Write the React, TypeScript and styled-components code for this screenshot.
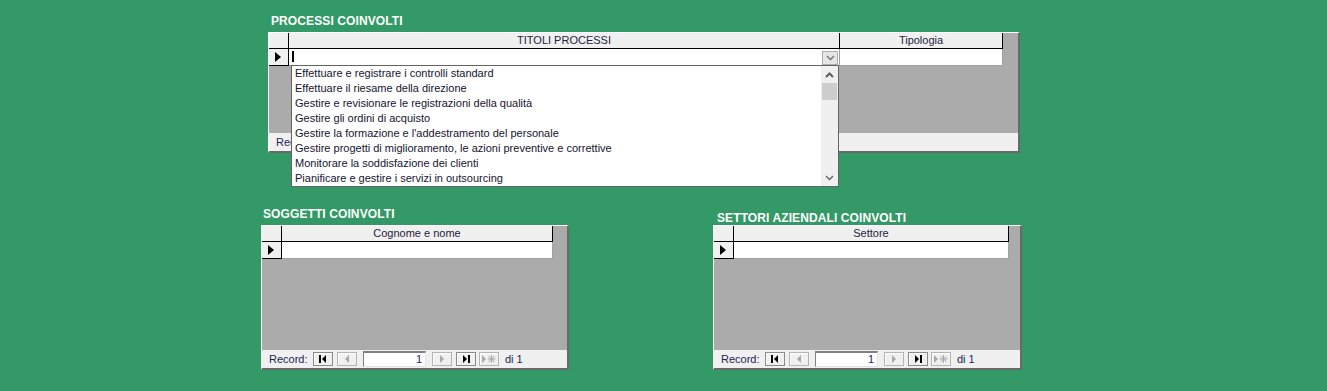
import React from 'react';
import styled, { createGlobalStyle } from 'styled-components';

const GlobalStyle = createGlobalStyle`
  html, body {
    margin: 0;
    padding: 0;
    background: #339966;
  }
  body {
    width: 1327px;
    height: 391px;
    overflow: hidden;
    font-family: 'Liberation Sans', Arial, sans-serif;
  }
  * {
    box-sizing: border-box;
  }
`;

const Page = styled.div`
  padding-top: 14px;
`;

const TopArea = styled.div`
  padding-left: 268px;
`;

const BottomRow = styled.div`
  display: flex;
  align-items: flex-end;
  gap: 144px;
  padding-left: 261px;
  margin-top: 54px;
`;

const Section = styled.div`
  display: flex;
  flex-direction: column;
`;

const Title = styled.div<{ $indent: number; $below: number }>`
  font-weight: bold;
  font-size: 12px;
  line-height: 14px;
  letter-spacing: 0.1px;
  color: #ffffff;
  white-space: nowrap;
  margin: 0 0 ${(p) => p.$below}px ${(p) => p.$indent}px;
`;

const Frame = styled.div<{ $width: number; $height: number }>`
  position: relative;
  width: ${(p) => p.$width}px;
  height: ${(p) => p.$height}px;
  background: #ababab;
  border-top: 1px solid #ffffff;
  border-left: 1px solid #ffffff;
  border-right: 2px solid #696969;
  border-bottom: 2px solid #696969;
  display: flex;
  flex-direction: column;
`;

const Sheet = styled.div`
  flex: 1;
`;

const Row = styled.div`
  display: flex;
`;

const HeadCell = styled.div<{ $w: number }>`
  width: ${(p) => p.$w}px;
  height: 16px;
  background: #f0f0f0;
  border-right: 1px solid #000000;
  border-bottom: 1px solid #000000;
  font-size: 11px;
  line-height: 15px;
  color: #1e2440;
  text-align: center;
  white-space: nowrap;
`;

const SelectorCell = styled.div`
  width: 20px;
  height: 17px;
  background: #f0f0f0;
  border-right: 1px solid #000000;
  border-bottom: 1px solid #000000;
  display: flex;
  align-items: center;
  justify-content: center;
`;

const DataCell = styled.div<{ $w: number }>`
  position: relative;
  width: ${(p) => p.$w}px;
  height: 17px;
  background: #ffffff;
  border-right: 1px solid #a0a0a0;
  border-bottom: 1px solid #a0a0a0;
`;

const Caret = styled.div`
  position: absolute;
  left: 3px;
  top: 2px;
  width: 2px;
  height: 11px;
  background: #000000;
`;

const ComboButton = styled.div`
  position: absolute;
  right: 1px;
  top: 2px;
  width: 16px;
  height: 14px;
  background: #e6e6e6;
  border: 1px solid #adadad;
  display: flex;
  align-items: center;
  justify-content: center;
`;

const DropList = styled.div`
  position: absolute;
  left: 22px;
  top: 32px;
  width: 548px;
  height: 122px;
  background: #ffffff;
  border: 1px solid #646464;
  display: flex;
  z-index: 2;
`;

const Options = styled.div`
  flex: 1;
  padding-left: 3px;
`;

const Option = styled.div`
  height: 15px;
  font-size: 11px;
  line-height: 15px;
  color: #151530;
  white-space: nowrap;
`;

const ScrollBar = styled.div`
  width: 17px;
  background: #f0f0f0;
  display: flex;
  flex-direction: column;
  align-items: center;
`;

const ScrollArrow = styled.div`
  width: 17px;
  height: 17px;
  display: flex;
  align-items: center;
  justify-content: center;
`;

const Thumb = styled.div`
  width: 15px;
  height: 17px;
  background: #cdcdcd;
`;

const Track = styled.div`
  flex: 1;
`;

const NavBar = styled.div`
  height: 18px;
  background: #f0f0f0;
  display: flex;
  align-items: center;
  padding-left: 7px;
  font-size: 11px;
  color: #1c2658;
  white-space: nowrap;
`;

const NavLabel = styled.span<{ $clip?: boolean }>`
  width: ${(p) => (p.$clip ? '16px' : '44px')};
  overflow: hidden;
`;

const NavButton = styled.div<{ $gap: number; $off?: boolean }>`
  width: 20px;
  height: 14px;
  margin-left: ${(p) => p.$gap}px;
  background: #f0f0f0;
  border: 1px solid ${(p) => (p.$off ? '#b4b4b4' : '#8a8a8a')};
  box-shadow: inset 1px 1px 0 #ffffff;
  display: flex;
  align-items: center;
  justify-content: center;
`;

const NavInput = styled.div`
  width: 63px;
  height: 16px;
  margin-left: 6px;
  background: #ffffff;
  border-top: 2px solid #808080;
  border-left: 1px solid #808080;
  border-right: 1px solid #e3e3e3;
  border-bottom: 1px solid #e3e3e3;
  text-align: right;
  padding-right: 3px;
  font-size: 11px;
  line-height: 13px;
  color: #1c2658;
`;

const NavCount = styled.span`
  margin-left: 6px;
`;

type Kind = 'first' | 'prev' | 'next' | 'last' | 'new';

const Glyph = ({ kind, off }: { kind: Kind; off?: boolean }) => {
  const c = off ? '#a8a8a8' : '#000000';
  if (kind === 'first')
    return (
      <svg width="10" height="10" viewBox="0 0 10 10">
        <rect x="1" y="1" width="2" height="8" fill={c} />
        <polygon points="8,1 4,5 8,9" fill={c} />
      </svg>
    );
  if (kind === 'prev')
    return (
      <svg width="10" height="10" viewBox="0 0 10 10">
        <polygon points="7,1 3,5 7,9" fill={c} />
      </svg>
    );
  if (kind === 'next')
    return (
      <svg width="10" height="10" viewBox="0 0 10 10">
        <polygon points="3,1 7,5 3,9" fill={c} />
      </svg>
    );
  if (kind === 'last')
    return (
      <svg width="10" height="10" viewBox="0 0 10 10">
        <polygon points="2,1 6,5 2,9" fill={c} />
        <rect x="7" y="1" width="2" height="8" fill={c} />
      </svg>
    );
  return (
    <svg width="16" height="10" viewBox="0 0 16 10">
      <polygon points="1,1 5,5 1,9" fill={c} />
      <g stroke={c} strokeWidth="1">
        <line x1="10.5" y1="1" x2="10.5" y2="9" />
        <line x1="6.5" y1="5" x2="14.5" y2="5" />
        <line x1="7.5" y1="2" x2="13.5" y2="8" />
        <line x1="13.5" y1="2" x2="7.5" y2="8" />
      </g>
    </svg>
  );
};

const RowArrow = () => (
  <svg width="7" height="10" viewBox="0 0 7 10">
    <polygon points="0,0 6,5 0,10" fill="#000000" />
  </svg>
);

const Chevron = ({ up, color }: { up?: boolean; color: string }) => (
  <svg width="9" height="6" viewBox="0 0 9 6">
    <polyline
      points={up ? '1,5 4.5,1.5 8,5' : '1,1 4.5,4.5 8,1'}
      fill="none"
      stroke={color}
      strokeWidth={up ? 2 : 1.3}
    />
  </svg>
);

// covered: the combo list lies over the bar, only the start of the label shows
const Navigator = ({ covered }: { covered?: boolean }) =>
  covered ? (
    <NavBar>
      <NavLabel $clip>Record:</NavLabel>
    </NavBar>
  ) : (
    <NavBar>
      <NavLabel>Record:</NavLabel>
      <NavButton $gap={0}>
        <Glyph kind="first" />
      </NavButton>
      <NavButton $gap={4} $off>
        <Glyph kind="prev" off />
      </NavButton>
      <NavInput>1</NavInput>
      <NavButton $gap={6} $off>
        <Glyph kind="next" off />
      </NavButton>
      <NavButton $gap={4}>
        <Glyph kind="last" />
      </NavButton>
      <NavButton $gap={3} $off>
        <Glyph kind="new" off />
      </NavButton>
      <NavCount>di 1</NavCount>
    </NavBar>
  );

type Column = { title: string; width: number };

const Datasheet = ({ columns, combo }: { columns: Column[]; combo?: boolean }) => (
  <Sheet>
    <Row>
      <HeadCell $w={20} />
      {columns.map((c) => (
        <HeadCell key={c.title} $w={c.width}>
          {c.title}
        </HeadCell>
      ))}
    </Row>
    <Row>
      <SelectorCell>
        <RowArrow />
      </SelectorCell>
      {columns.map((c, i) => (
        <DataCell key={c.title} $w={c.width}>
          {combo && i === 0 && (
            <>
              <Caret />
              <ComboButton>
                <Chevron color="#707070" />
              </ComboButton>
            </>
          )}
        </DataCell>
      ))}
    </Row>
  </Sheet>
);

const processi = [
  'Effettuare e registrare i controlli standard',
  'Effettuare il riesame della direzione',
  'Gestire e revisionare le registrazioni della qualità',
  'Gestire gli ordini di acquisto',
  "Gestire la formazione e l'addestramento del personale",
  'Gestire progetti di miglioramento, le azioni preventive e correttive',
  'Monitorare la soddisfazione dei clienti',
  'Pianificare e gestire i servizi in outsourcing',
];

const App = () => (
  <>
    <GlobalStyle />
    <Page>
      <TopArea>
        <Section>
          <Title $indent={3} $below={4}>
            PROCESSI COINVOLTI
          </Title>
          <Frame $width={752} $height={121}>
            <Datasheet
              combo
              columns={[
                { title: 'TITOLI PROCESSI', width: 551 },
                { title: 'Tipologia', width: 163 },
              ]}
            />
            <Navigator covered />
            <DropList>
              <Options>
                {processi.map((p) => (
                  <Option key={p}>{p}</Option>
                ))}
              </Options>
              <ScrollBar>
                <ScrollArrow>
                  <Chevron up color="#606060" />
                </ScrollArrow>
                <Thumb />
                <Track />
                <ScrollArrow>
                  <Chevron color="#606060" />
                </ScrollArrow>
              </ScrollBar>
            </DropList>
          </Frame>
        </Section>
      </TopArea>
      <BottomRow>
        <Section>
          <Title $indent={2} $below={4}>
            SOGGETTI COINVOLTI
          </Title>
          <Frame $width={308} $height={145}>
            <Datasheet columns={[{ title: 'Cognome e nome', width: 271 }]} />
            <Navigator />
          </Frame>
        </Section>
        <Section>
          <Title $indent={4} $below={0}>
            SETTORI AZIENDALI COINVOLTI
          </Title>
          <Frame $width={309} $height={145}>
            <Datasheet columns={[{ title: 'Settore', width: 275 }]} />
            <Navigator />
          </Frame>
        </Section>
      </BottomRow>
    </Page>
  </>
);

export default App;
